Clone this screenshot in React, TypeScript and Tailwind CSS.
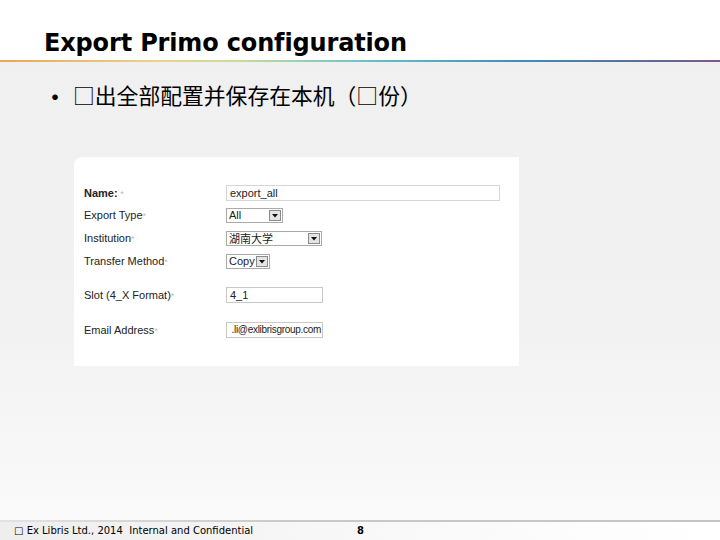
import React from "react";

function Sel({ w, text, cjk }: { w: string; text: string; cjk?: boolean }) {
  return (
    <div className={`${w} h-[15px] border border-[#a9a9a9] bg-white flex items-center justify-between pl-[2px] pr-[1px]`}>
      <span className={`text-[11px] leading-none text-[#222] ${cjk ? "[font-family:'Noto_Sans_CJK_SC',sans-serif] text-[10px]" : ""}`}>{text}</span>
      <div className="w-[12px] h-[11px] border border-[#8a8a8a] bg-[#e4e4e4] flex items-center justify-center">
        <svg width="6" height="4" viewBox="0 0 6 4"><path d="M0 0h6L3 3.5z" fill="#111" /></svg>
      </div>
    </div>
  );
}

function Label({ text, bold }: { text: string; bold?: boolean }) {
  return (
    <div className={`w-[142px] text-[11px] leading-none text-[#222] ${bold ? "font-bold" : ""}`}>
      {text}
      <span className="text-[#c9b8b8] font-normal text-[9px]">{bold ? " *" : "*"}</span>
    </div>
  );
}

export default function App() {
  return (
    <div className="w-[720px] h-[540px] flex flex-col bg-white overflow-hidden [font-family:'Liberation_Sans',Arial,sans-serif]">
      <div className="h-[60px] bg-white pl-[44px] pt-[31px]">
        <div className="text-[24px] leading-none font-bold text-black tracking-[-0.15px] [font-family:'DejaVu_Sans',Verdana,sans-serif]">
          Export Primo configuration
        </div>
      </div>
      <div className="h-[2px] bg-[linear-gradient(90deg,#e9a657_0%,#ecd38a_22%,#c9dc9a_33%,#6cc4c8_50%,#3f8fb8_72%,#5a6e9a_88%,#7b5a86_100%)]" />
      <div className="flex-1 flex flex-col bg-[linear-gradient(180deg,#f0f0f0_0%,#f2f2f2_60%,#fafafa_100%)]">
        <div className="flex items-center mt-[22px] pl-[44px] h-[22px] text-[21.8px] leading-none text-black [font-family:'Noto_Sans_CJK_SC',sans-serif]">
          <span className="w-[29px] text-[22px] font-bold">•</span>
          <span>□出全部配置并保存在本机（□份）</span>
        </div>
        <div className="ml-[74px] mt-[51px] w-[445px] h-[209px] bg-white rounded-tl-[8px] flex flex-col pt-[28px] pl-[10px]">
          <div className="flex items-center h-[16px]">
            <Label text="Name:" bold />
            <div className="w-[274px] h-[16px] border border-[#d6d6d6] flex items-center pl-[3px] text-[11px] text-[#222] leading-none">export_all</div>
          </div>
          <div className="flex items-center h-[15px] mt-[7px]">
            <Label text="Export Type" />
            <Sel w="w-[57px]" text="All" />
          </div>
          <div className="flex items-center h-[15px] mt-[8px]">
            <Label text="Institution" />
            <Sel w="w-[96px]" text="湖南大学" cjk />
          </div>
          <div className="flex items-center h-[15px] mt-[8px]">
            <Label text="Transfer Method" />
            <Sel w="w-[44px]" text="Copy" />
          </div>
          <div className="flex items-center h-[16px] mt-[18px]">
            <Label text="Slot (4_X Format)" />
            <div className="w-[97px] h-[16px] border border-[#c8c8c8] flex items-center pl-[3px] text-[11px] text-[#222] leading-none">4_1</div>
          </div>
          <div className="flex items-center h-[16px] mt-[19px]">
            <Label text="Email Address" />
            <div className="w-[97px] h-[16px] border border-[#c8c8c8] flex items-center justify-end pr-[1px] whitespace-nowrap text-[10px] tracking-[-0.3px] text-[#222] leading-none">.li@exlibrisgroup.com</div>
          </div>
        </div>
        <div className="flex-1" />
      </div>
      <div className="h-[2px] bg-[linear-gradient(90deg,#e2e2e2_0%,#c9c9c9_40%,#c4c4c4_100%)]" />
      <div className="h-[18px] flex items-center bg-[linear-gradient(90deg,#eeeeee_0%,#f8f8f8_50%,#ffffff_100%)] text-[10px] leading-none text-black [font-family:'DejaVu_Sans',Verdana,sans-serif]">
        <span className="pl-[14px] w-[357px]">□ Ex Libris Ltd., 2014&nbsp; Internal and Confidential</span>
        <span className="font-bold">8</span>
      </div>
    </div>
  );
}
